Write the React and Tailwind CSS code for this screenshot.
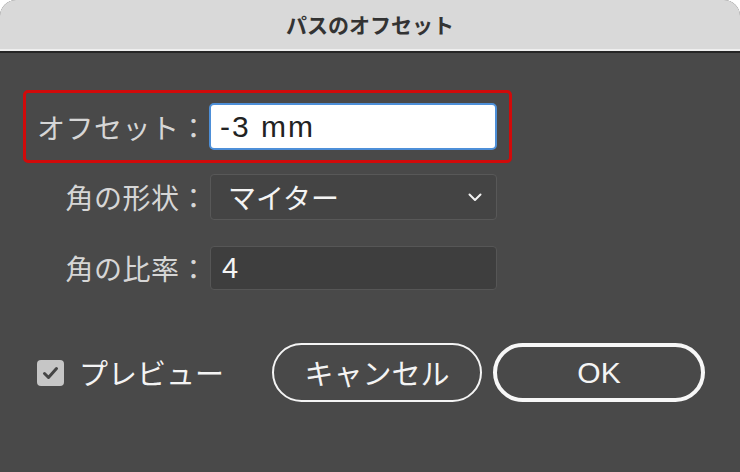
import React from 'react';

const jp = { fontFamily: '"Noto Sans CJK JP", "Noto Sans", sans-serif' };
const latin = { fontFamily: '"Liberation Sans", Arial, "Noto Sans CJK JP", sans-serif' };

// Label column shared by the three rows, right aligned up to the field
function FieldLabel({ children }) {
  return (
    <div className="w-[182px] shrink-0 text-right text-[28px] tracking-[0.5px] leading-none text-[#d6d6d6]" style={jp}>
      {children}
    </div>
  );
}

function Chevron() {
  return (
    <svg width="14" height="9" viewBox="0 0 14 9" fill="none">
      <path d="M1.5 1.5 L7 7 L12.5 1.5" stroke="#f2f2f2" strokeWidth="2" strokeLinecap="round" strokeLinejoin="round" />
    </svg>
  );
}

function CheckBox() {
  return (
    <div className="w-[27px] h-[26px] rounded-[4px] bg-[#c6c6c6] flex items-center justify-center">
      <svg width="17" height="14" viewBox="0 0 17 14" fill="none">
        <path d="M2.5 7.5 L6.5 11.5 L14.5 2.5" stroke="#454545" strokeWidth="3" strokeLinecap="round" strokeLinejoin="round" />
      </svg>
    </div>
  );
}

export default function App() {
  return (
    <div className="w-[740px] h-[472px] bg-white overflow-hidden">
      <div className="w-full h-full flex flex-col rounded-t-[16px] overflow-hidden bg-[#494949]">
        {/* title bar */}
        <div className="h-[49px] bg-[#d9d9d9] flex items-center justify-center">
          <span className="text-[21px] font-bold text-[#333333]" style={jp}>
            パスのオフセット
          </span>
        </div>
        <div className="h-[2px] bg-[#eeeeee]" />
        <div className="h-[2px] bg-[#252525]" />

        <div className="flex flex-col">
          {/* offset row, highlighted */}
          <div className="mt-[37px] ml-[23px] w-[489px] h-[73px] border-[3px] border-[#d10a0a] rounded-[5px] flex items-center">
            <FieldLabel>オフセット：</FieldLabel>
            <div className="ml-[1px] w-[288px] h-[47px] bg-white border-2 border-[#4d8fd8] rounded-[5px] flex items-center pl-[9px]">
              <span className="text-[30px] leading-none text-[#222222] tracking-[2px]" style={latin}>-3 mm</span>
            </div>
          </div>

          {/* corner shape */}
          <div className="mt-[11px] ml-[26px] flex items-center">
            <FieldLabel>角の形状：</FieldLabel>
            <div className="ml-[2px] w-[287px] h-[46px] bg-[#444444] border border-[#585858] rounded-[4px] flex items-center justify-between pl-[17px] pr-[14px]">
              <span className="text-[28px] leading-none text-[#f4f4f4]" style={jp}>マイター</span>
              <Chevron />
            </div>
          </div>

          {/* miter ratio */}
          <div className="mt-[26px] ml-[26px] flex items-center">
            <FieldLabel>角の比率：</FieldLabel>
            <div className="ml-[2px] w-[287px] h-[44px] bg-[#3e3e3e] border border-[#565656] rounded-[4px] flex items-center pl-[11px]">
              <span className="text-[29px] leading-none text-[#f4f4f4]" style={latin}>4</span>
            </div>
          </div>

          {/* bottom row */}
          <div className="mt-[53px] flex items-center">
            <div className="ml-[37px] flex items-center">
              <CheckBox />
              <span className="ml-[15px] text-[29px] leading-none text-[#f4f4f4]" style={jp}>プレビュー</span>
            </div>
            <button className="ml-[48px] w-[210px] h-[59px] rounded-full border-2 border-[#f4f4f4] flex items-center justify-center text-[29px] leading-none text-[#f4f4f4]" style={jp}>
              キャンセル
            </button>
            <button className="ml-[11px] w-[212px] h-[59px] rounded-full border-[4px] border-[#f7f7f7] flex items-center justify-center text-[30px] leading-none text-[#f4f4f4]" style={latin}>
              OK
            </button>
          </div>
        </div>
      </div>
    </div>
  );
}
